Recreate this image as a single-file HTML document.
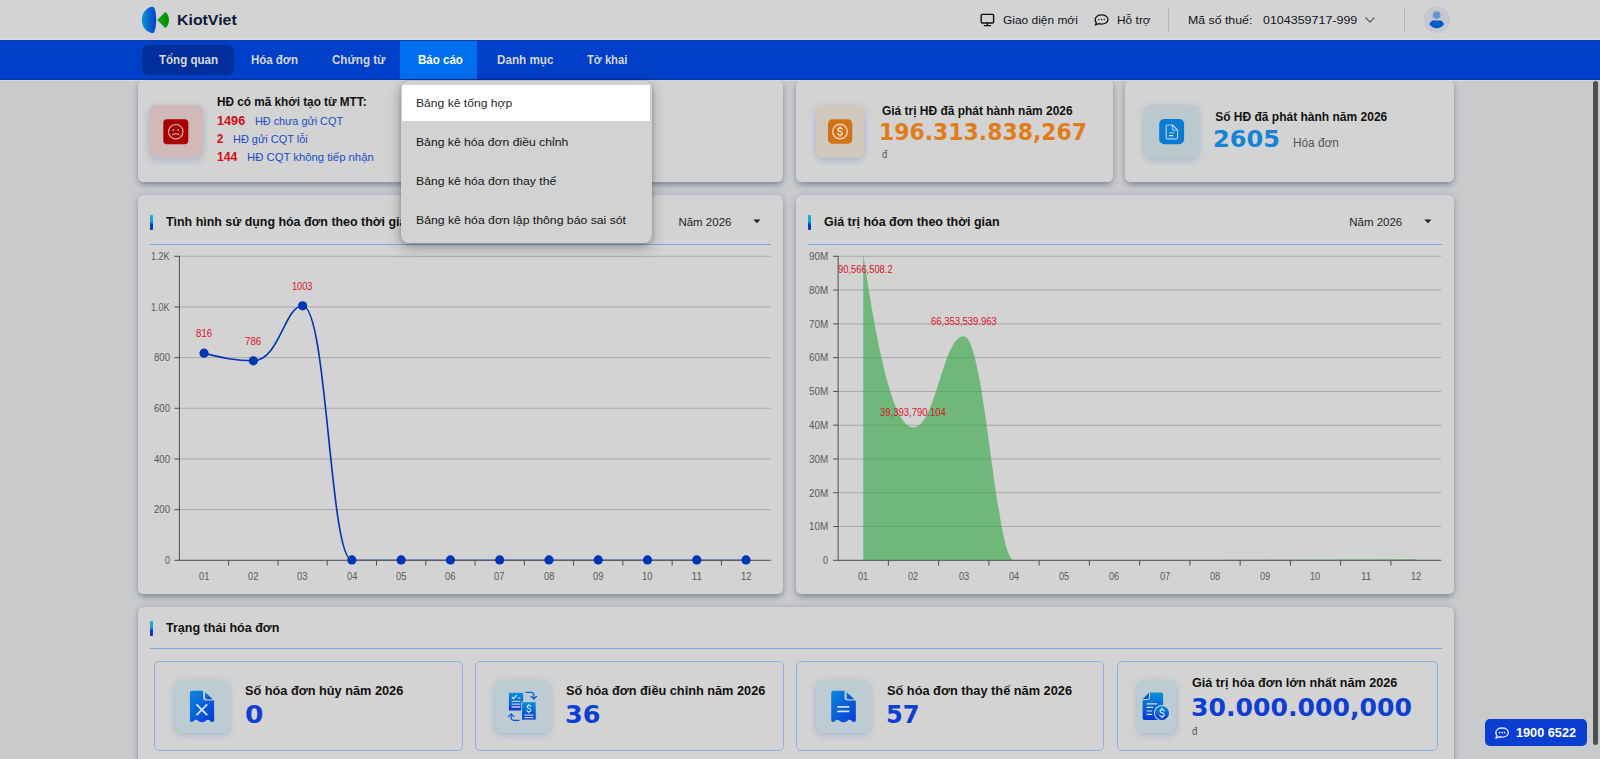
<!DOCTYPE html>
<html lang="vi">
<head>
<meta charset="utf-8">
<title>KiotViet - Tổng quan</title>
<style>
*{box-sizing:border-box;margin:0;padding:0}
html,body{width:1600px;height:759px;overflow:hidden}
body{position:relative;background:#c9cacc;font-family:"Liberation Sans",sans-serif;color:#222}
.abs{position:absolute}
.t{position:absolute;white-space:nowrap;line-height:1;transform-origin:0 50%;z-index:5}
.header{position:absolute;left:0;top:0;width:1600px;height:40px;background:#d3d3d3;z-index:4}
.nav{position:absolute;left:0;top:40px;width:1600px;height:40px;background:#003fc7;z-index:4;border-bottom:1px solid #0033ae;border-top:1px solid #0a3bb4}
.navline{position:absolute;left:0;top:80px;width:1592px;height:1px;background:#d8d6cf;z-index:4}
.pill{position:absolute;left:142px;top:4px;width:92px;height:30px;border-radius:7px;background:#002f9c}
.tabact{position:absolute;left:400px;top:0;width:77px;height:38px;background:#006fef}
.card{position:absolute;background:#d3d3d3;border-radius:5.5px;box-shadow:0 0 5px rgba(85,115,170,.30),0 4px 7px -2px rgba(48,58,80,.50)}
.ibox{position:absolute;border-radius:7px;box-shadow:0 2px 7px rgba(110,145,200,.45)}
.sub{position:absolute;border:1px solid #8fb2e3;border-radius:5px}
.bar{position:absolute;width:3.3px;height:15px;border-radius:1px;background:linear-gradient(#1aa8e4 0%,#179fe0 46%,#0a3ecc 62%,#0a30c4 100%)}
.hline{position:absolute;height:1px;background:#78a9de}
.dd{position:absolute;left:401px;top:80.5px;width:251px;height:162.5px;background:#d2d2d2;border-radius:0 0 8px 8px;box-shadow:0 4px 14px rgba(0,0,0,.30),0 1px 4px rgba(0,0,0,.18);z-index:15;border-radius:8px}
.ddsel{position:absolute;left:1px;top:4.5px;width:248px;height:36px;background:#fff}
.vdiv{position:absolute;width:1px;background:#b2b6bf;top:7.5px;height:24.5px}
.phone{position:absolute;left:1485px;top:719px;width:101.5px;height:26.5px;border-radius:5px;background:#0a3ed2;z-index:35}
.sbar{position:absolute;left:1593.300px;top:81px;width:5.200px;height:664px;border-radius:3px;background:#4e4e4e;z-index:10}
svg{position:absolute;overflow:visible}

</style>
</head>
<body>
<div class="header">
  <!-- logo -->
  <svg style="left:141px;top:6px" width="30" height="28" viewBox="0 0 30 28">
    <defs><linearGradient id="lg1" x1="0" y1="0" x2="1" y2="0"><stop offset="0" stop-color="#0c96d6"/><stop offset=".5" stop-color="#0668cc"/><stop offset="1" stop-color="#0a3fcc"/></linearGradient>
    <linearGradient id="lg2" x1="0" y1="0" x2="1" y2="0"><stop offset="0" stop-color="#10a814"/><stop offset="1" stop-color="#068a0a"/></linearGradient></defs>
    <path d="M10.600 .8C12 .5 13.200 1.200 13.600 2.600C14.800 6.500 15.200 10 15.200 14C15.200 18 14.800 21.500 13.600 25.200C13.200 26.700 12 27.400 10.600 27C4.600 25.400 .9 20.500 .9 14C.9 7.500 4.600 2.400 10.600 .8Z" fill="url(#lg1)"/>
    <path d="M17 13.200L23.200 6.900C24 6 25.200 6.100 25.800 7.200C27.300 9.500 28 11.600 28 14C28 16.400 27.300 18.500 25.800 20.800C25.200 21.900 24 22 23.200 21.100L17 14.800C16.400 14.300 16.400 13.700 17 13.200Z" fill="url(#lg2)"/>
  </svg>
  <!-- monitor icon -->
  <svg style="left:980px;top:13px" width="15" height="14" viewBox="0 0 15 14" fill="none" stroke="#0f0f16" stroke-width="1.4">
    <rect x="1.2" y="1.4" width="12.4" height="8.6" rx="1.2"/><path d="M4.300 12.600h6.200M7.400 10v2.400" stroke-linecap="round"/>
  </svg>
  <!-- chat icon -->
  <svg style="left:1094px;top:14px" width="15" height="12" viewBox="0 0 15 12" fill="none" stroke="#0f0f16" stroke-width="1.3">
    <path d="M7.6 0.9C11.2 0.9 14 2.9 14 5.5S11.2 10.1 7.6 10.1c-.9 0-1.8-.1-2.6-.4L1.4 11l1-2.3C1.500 7.900 1.2 6.800 1.2 5.500 1.2 2.900 4 0.900 7.600 0.900Z" stroke-linejoin="round"/>
    <circle cx="4.9" cy="5.5" r=".7" fill="#0f0f16" stroke="none"/><circle cx="7.6" cy="5.5" r=".7" fill="#0f0f16" stroke="none"/><circle cx="10.3" cy="5.5" r=".7" fill="#0f0f16" stroke="none"/>
  </svg>
  <div class="vdiv" style="left:1168px"></div>
  <svg style="left:1365px;top:17px" width="10" height="6" viewBox="0 0 10 6" fill="none" stroke="#3c3f4c" stroke-width="1.050"><path d="M.6.6 5 5 9.400.6"/></svg>
  <div class="vdiv" style="left:1404px"></div>
  <svg style="left:1423px;top:6px" width="28" height="28" viewBox="0 0 28 28">
    <circle cx="13.700" cy="13.700" r="13.300" fill="#c5c7cc"/>
    <circle cx="13.600" cy="9.100" r="3.800" fill="#6496d3"/>
    <path d="M9.500 14.600H17.900C19.600 15.400 20.600 16.900 21 18.300C19.600 20.700 17 22.200 13.700 22.200C10.400 22.200 7.800 20.700 6.400 18.300C6.800 16.900 7.800 15.400 9.500 14.600Z" fill="#035bcb"/>
  </svg>
</div>
<div class="nav">
  <div class="pill"></div>
  <div class="tabact"></div>
</div>
<div class="navline"></div>
<div class="navline" style="top:39.300px;height:.8px;width:1600px;background:#dddad0;z-index:5"></div>

<!-- top cards -->
<div class="card" style="left:138px;top:80.3px;width:645px;height:101.8px"></div>
<div class="card" style="left:796px;top:80.3px;width:316.5px;height:101.8px"></div>
<div class="card" style="left:1125px;top:80.3px;width:329px;height:101.8px"></div>

<div class="ibox" style="left:149px;top:105px;width:53.5px;height:53px;background:#d0b9b9"></div>
<svg style="left:163px;top:119px" width="26" height="26" viewBox="0 0 26 26">
  <rect x=".3" y=".2" width="25" height="25" rx="3.6" fill="#a90000"/>
  <circle cx="12.800" cy="12.700" r="7.200" fill="none" stroke="#dcbcbc" stroke-width="1.100"/>
  <rect x="9.700" y="10.200" width="1.500" height="1.500" fill="#dcbcbc"/><rect x="14.400" y="10.200" width="1.500" height="1.500" fill="#dcbcbc"/>
  <path d="M9.500 15.700c2-1.200 4.600-1.200 6.600 0" fill="none" stroke="#dcbcbc" stroke-width="1.100" stroke-linecap="round"/>
</svg>

<div class="ibox" style="left:816px;top:105px;width:48px;height:52.5px;background:#d0c8bb"></div>
<svg style="left:828px;top:119px" width="25" height="25" viewBox="0 0 25 25">
  <rect x="0" y=".2" width="24.200" height="24.600" rx="4.600" fill="#d17118"/>
  <circle cx="12" cy="12.500" r="7.300" fill="none" stroke="#ecd3b9" stroke-width="1.400"/>
  <path d="M14.300 10.300c-.4-.9-1.200-1.300-2.200-1.300-1.300 0-2.200.7-2.200 1.700 0 2.400 4.500 1.100 4.500 3.600 0 1.100-1 1.800-2.300 1.800-1.100 0-2-.5-2.400-1.400M12.100 7.700v1.300M12.100 16.100v1.300" fill="none" stroke="#f1dcc6" stroke-width="1.400" stroke-linecap="round"/>
</svg>

<div class="ibox" style="left:1144.300px;top:104.800px;width:54.500px;height:53.600px;background:#bbc9cf"></div>
<svg style="left:1159px;top:118.800px" width="26" height="26" viewBox="0 0 26 26">
  <rect x=".2" y="0" width="24.900" height="25.200" rx="5" fill="#0a7dd3"/>
  <path d="M8.700 6H13.500L18.600 11.100V18.400Q18.600 19.900 17.100 19.900H8.700Q7.200 19.900 7.200 18.400V7.500Q7.200 6 8.700 6Z" fill="none" stroke="#b9d4e8" stroke-width="1.100" stroke-linejoin="round"/>
  <path d="M13.400 6.200V9.700Q13.400 11.200 14.900 11.200H18.400" fill="none" stroke="#b9d4e8" stroke-width="1.100"/>
  <path d="M10.400 13.700H15.200" stroke="#7fb6e4" stroke-width="1.600"/>
  <path d="M10.400 16.700H13.800" stroke="#d5e6f2" stroke-width="1.200" stroke-linecap="round"/>
</svg>

<!-- chart panels -->
<div class="card" style="left:138px;top:195.300px;width:645px;height:398.500px"></div>
<div class="card" style="left:796px;top:195.300px;width:658px;height:398.500px"></div>
<div class="bar" style="left:150px;top:215px"></div>
<div class="bar" style="left:808px;top:215px"></div>
<div class="hline" style="left:150px;top:244px;width:621px"></div>
<div class="hline" style="left:808px;top:244px;width:634px"></div>
<svg style="left:752.5px;top:219px" width="8" height="5" viewBox="0 0 8 5"><path d="M.3.500h7.200L3.900 4.300Z" fill="#222"/></svg>
<svg style="left:1424px;top:219px" width="8" height="5" viewBox="0 0 8 5"><path d="M.3.500h7.200L3.900 4.300Z" fill="#222"/></svg>
<svg style="left:0;top:0;z-index:2" width="1600" height="759" viewBox="0 0 1600 759">
<path d="M179.4 509.63H770.7" stroke="#a9a9a9" stroke-width="1" fill="none"/>
<path d="M179.4 458.97H770.7" stroke="#a9a9a9" stroke-width="1" fill="none"/>
<path d="M179.4 408.30H770.7" stroke="#a9a9a9" stroke-width="1" fill="none"/>
<path d="M179.4 357.63H770.7" stroke="#a9a9a9" stroke-width="1" fill="none"/>
<path d="M179.4 306.97H770.7" stroke="#a9a9a9" stroke-width="1" fill="none"/>
<path d="M179.4 256.30H770.7" stroke="#a9a9a9" stroke-width="1" fill="none"/>
<path d="M174.4 560.30H179.4" stroke="#505050" stroke-width="1" fill="none"/>
<path d="M174.4 509.63H179.4" stroke="#505050" stroke-width="1" fill="none"/>
<path d="M174.4 458.97H179.4" stroke="#505050" stroke-width="1" fill="none"/>
<path d="M174.4 408.30H179.4" stroke="#505050" stroke-width="1" fill="none"/>
<path d="M174.4 357.63H179.4" stroke="#505050" stroke-width="1" fill="none"/>
<path d="M174.4 306.97H179.4" stroke="#505050" stroke-width="1" fill="none"/>
<path d="M174.4 256.30H179.4" stroke="#505050" stroke-width="1" fill="none"/>
<path d="M204.04 353.18C220.46 357.23 233.60 360.78 253.31 360.78C278.94 360.78 284.85 305.81 302.59 305.81C327.23 305.81 329.69 559.90 351.86 559.90" stroke="#0034b0" stroke-width="1.6" fill="none" stroke-linecap="round"/>
<path d="M351.86 560.00H746.06" stroke="#3a5fcf" stroke-width="1.2" fill="none"/>
<path d="M179.4 255.80V560.80" stroke="#505050" stroke-width="1" fill="none"/>
<path d="M179.4 560.30H770.7" stroke="#505050" stroke-width="1" fill="none"/>
<path d="M228.68 560.30V565.60" stroke="#505050" stroke-width="1" fill="none"/>
<path d="M277.95 560.30V565.60" stroke="#505050" stroke-width="1" fill="none"/>
<path d="M327.23 560.30V565.60" stroke="#505050" stroke-width="1" fill="none"/>
<path d="M376.50 560.30V565.60" stroke="#505050" stroke-width="1" fill="none"/>
<path d="M425.78 560.30V565.60" stroke="#505050" stroke-width="1" fill="none"/>
<path d="M475.05 560.30V565.60" stroke="#505050" stroke-width="1" fill="none"/>
<path d="M524.33 560.30V565.60" stroke="#505050" stroke-width="1" fill="none"/>
<path d="M573.60 560.30V565.60" stroke="#505050" stroke-width="1" fill="none"/>
<path d="M622.88 560.30V565.60" stroke="#505050" stroke-width="1" fill="none"/>
<path d="M672.15 560.30V565.60" stroke="#505050" stroke-width="1" fill="none"/>
<path d="M721.43 560.30V565.60" stroke="#505050" stroke-width="1" fill="none"/>
<circle cx="204.04" cy="353.18" r="4.6" fill="#0034b4"/>
<circle cx="253.31" cy="360.78" r="4.6" fill="#0034b4"/>
<circle cx="302.59" cy="305.81" r="4.6" fill="#0034b4"/>
<circle cx="351.86" cy="559.90" r="4.6" fill="#0034b4"/>
<circle cx="401.14" cy="559.90" r="4.6" fill="#0034b4"/>
<circle cx="450.41" cy="559.90" r="4.6" fill="#0034b4"/>
<circle cx="499.69" cy="559.90" r="4.6" fill="#0034b4"/>
<circle cx="548.96" cy="559.90" r="4.6" fill="#0034b4"/>
<circle cx="598.24" cy="559.90" r="4.6" fill="#0034b4"/>
<circle cx="647.51" cy="559.90" r="4.6" fill="#0034b4"/>
<circle cx="696.79" cy="559.90" r="4.6" fill="#0034b4"/>
<circle cx="746.06" cy="559.90" r="4.6" fill="#0034b4"/>
<path d="M838.1 526.52H1441.2" stroke="#a9a9a9" stroke-width="1" fill="none"/>
<path d="M838.1 492.74H1441.2" stroke="#a9a9a9" stroke-width="1" fill="none"/>
<path d="M838.1 458.97H1441.2" stroke="#a9a9a9" stroke-width="1" fill="none"/>
<path d="M838.1 425.19H1441.2" stroke="#a9a9a9" stroke-width="1" fill="none"/>
<path d="M838.1 391.41H1441.2" stroke="#a9a9a9" stroke-width="1" fill="none"/>
<path d="M838.1 357.63H1441.2" stroke="#a9a9a9" stroke-width="1" fill="none"/>
<path d="M838.1 323.86H1441.2" stroke="#a9a9a9" stroke-width="1" fill="none"/>
<path d="M838.1 290.08H1441.2" stroke="#a9a9a9" stroke-width="1" fill="none"/>
<path d="M838.1 256.30H1441.2" stroke="#a9a9a9" stroke-width="1" fill="none"/>
<path d="M833.1 560.30H838.1" stroke="#505050" stroke-width="1" fill="none"/>
<path d="M833.1 526.52H838.1" stroke="#505050" stroke-width="1" fill="none"/>
<path d="M833.1 492.74H838.1" stroke="#505050" stroke-width="1" fill="none"/>
<path d="M833.1 458.97H838.1" stroke="#505050" stroke-width="1" fill="none"/>
<path d="M833.1 425.19H838.1" stroke="#505050" stroke-width="1" fill="none"/>
<path d="M833.1 391.41H838.1" stroke="#505050" stroke-width="1" fill="none"/>
<path d="M833.1 357.63H838.1" stroke="#505050" stroke-width="1" fill="none"/>
<path d="M833.1 323.86H838.1" stroke="#505050" stroke-width="1" fill="none"/>
<path d="M833.1 290.08H838.1" stroke="#505050" stroke-width="1" fill="none"/>
<path d="M833.1 256.30H838.1" stroke="#505050" stroke-width="1" fill="none"/>
<path d="M863.23 560.30L863.23 254.39C879.98 366.74 895.39 427.24 913.49 427.24C936.10 427.24 942.64 336.17 963.75 336.17C984.85 336.17 995.91 560.30 1014.00 560.30L1416.07 559.30L1416.07 560.30Z" fill="#2ea63f" fill-opacity=".6" stroke="none"/>
<path d="M838.1 255.80V560.80" stroke="#505050" stroke-width="1" fill="none"/>
<path d="M838.1 560.30H1441.2" stroke="#505050" stroke-width="1" fill="none"/>
<path d="M888.36 560.30V565.60" stroke="#505050" stroke-width="1" fill="none"/>
<path d="M938.62 560.30V565.60" stroke="#505050" stroke-width="1" fill="none"/>
<path d="M988.88 560.30V565.60" stroke="#505050" stroke-width="1" fill="none"/>
<path d="M1039.13 560.30V565.60" stroke="#505050" stroke-width="1" fill="none"/>
<path d="M1089.39 560.30V565.60" stroke="#505050" stroke-width="1" fill="none"/>
<path d="M1139.65 560.30V565.60" stroke="#505050" stroke-width="1" fill="none"/>
<path d="M1189.91 560.30V565.60" stroke="#505050" stroke-width="1" fill="none"/>
<path d="M1240.17 560.30V565.60" stroke="#505050" stroke-width="1" fill="none"/>
<path d="M1290.42 560.30V565.60" stroke="#505050" stroke-width="1" fill="none"/>
<path d="M1340.68 560.30V565.60" stroke="#505050" stroke-width="1" fill="none"/>
<path d="M1390.94 560.30V565.60" stroke="#505050" stroke-width="1" fill="none"/>
</svg>

<!-- bottom panel -->
<div class="card" style="left:138px;top:607.300px;width:1316px;height:170px"></div>
<div class="bar" style="left:150px;top:620.800px"></div>
<div class="hline" style="left:150px;top:647.700px;width:1292px"></div>
<div class="sub" style="left:154px;top:661px;width:309px;height:90px"></div>
<div class="sub" style="left:475px;top:661px;width:308.500px;height:90px"></div>
<div class="sub" style="left:796px;top:661px;width:308.300px;height:90px"></div>
<div class="sub" style="left:1116.500px;top:661px;width:321.500px;height:90px"></div>
<div class="ibox" style="left:174.700px;top:679.700px;width:54.400px;height:53.300px;background:#bdccd3"></div>
<div class="ibox" style="left:495.400px;top:679.700px;width:54.400px;height:53.300px;background:#bdccd3"></div>
<div class="ibox" style="left:816.400px;top:679.700px;width:54px;height:53.300px;background:#bdccd3"></div>
<div class="ibox" style="left:1137px;top:679.700px;width:38.500px;height:53.300px;background:#bdccd3"></div>
<svg style="left:0;top:0;z-index:3" width="1600" height="759" viewBox="0 0 1600 759">
  <defs>
    <linearGradient id="ig" x1="0" y1="0" x2="1" y2="1"><stop offset="0" stop-color="#0a88dc"/><stop offset="1" stop-color="#0838d6"/></linearGradient>
    <linearGradient id="ig2" x1="0" y1="0" x2="0" y2="1"><stop offset="0" stop-color="#0a92d8"/><stop offset="1" stop-color="#0838d4"/></linearGradient>
  </defs>
  <!-- icon 1: cancelled receipt -->
  <g transform="translate(189.9 690.8)">
    <path d="M2.200 0H13.100V7.300Q13.100 9.700 15.500 9.700H24.200V29.400Q24.200 31.100 22.600 31.100Q21.300 31.100 20.300 30.100Q19.200 28.900 18 28.900Q16.800 28.900 15.700 30.100Q14.200 31.400 12.100 31.400Q10 31.400 8.500 30.100Q7.400 28.900 6.200 28.900Q5 28.900 3.900 30.100Q2.900 31.100 1.600 31.100Q0 31.100 0 29.400V2.200Q0 0 2.200 0Z" fill="url(#ig)"/>
    <path d="M15.200 1.300L22.700 8.400H16.600Q15.200 8.400 15.200 7Z" fill="url(#ig)"/>
    <path d="M7.100 14.100L16.800 23.800M16.800 14.100L7.100 23.800" stroke="#d3e0e8" stroke-width="1.900" stroke-linecap="round" fill="none"/>
  </g>
  <!-- icon 3: replaced receipt -->
  <g transform="translate(831.2 690.8)">
    <path d="M2.200 0H13.300V7.300Q13.300 9.700 15.700 9.700H24.600V29.400Q24.600 31.100 23 31.100Q21.700 31.100 20.700 30.100Q19.500 28.900 18.300 28.900Q17.100 28.900 16 30.100Q14.400 31.400 12.300 31.400Q10.200 31.400 8.600 30.100Q7.500 28.900 6.300 28.900Q5.100 28.900 3.900 30.100Q2.900 31.100 1.600 31.100Q0 31.100 0 29.400V2.200Q0 0 2.200 0Z" fill="url(#ig)"/>
    <path d="M15.400 1.300L23.100 8.400H16.800Q15.400 8.400 15.400 7Z" fill="url(#ig)"/>
    <path d="M6.700 16H17.500M6.700 20.600H17.500" stroke="#d3e0e8" stroke-width="1.700" stroke-linecap="round" fill="none"/>
  </g>
  <!-- icon 2: adjust docs -->
  <g transform="translate(508 690)">
    <rect x=".9" y="2.800" width="14.300" height="17.800" rx=".8" fill="url(#ig2)"/>
    <path d="M3.900 7L5.600 8.700L8.900 5.200" stroke="#dbe7ee" stroke-width="1.200" fill="none"/>
    <path d="M9.700 8.100H12.400" stroke="#dbe7ee" stroke-width="1" fill="none"/>
    <path d="M3.600 11.400H12.400M3.600 14.200H12.400M3.600 17H12.400" stroke="#b9cfe9" stroke-width="1.300" fill="none"/>
    <rect x="13.600" y="11.700" width="14.600" height="18.400" rx=".8" fill="url(#ig2)" stroke="#c4d3da" stroke-width=".9"/>
    <path d="M22.900 16.600C22.500 15.700 21.800 15.400 20.900 15.400C19.800 15.400 19 16 19 16.900C19 19 22.900 17.900 22.900 20.200C22.900 21.100 22.100 21.800 20.900 21.800C20 21.800 19.200 21.400 18.800 20.600M20.900 14.200V15.400M20.900 21.800V23" stroke="#dbe7ee" stroke-width="1.100" fill="none" stroke-linecap="round"/>
    <path d="M16.400 25.200H25.400M16.400 27.600H25.400" stroke="#b9cfe9" stroke-width="1.300" fill="none"/>
    <path d="M18 2.400H23.300Q25.800 2.400 25.800 4.900V8" stroke="#0a66d8" stroke-width="1.200" fill="none" stroke-linecap="round"/>
    <path d="M23 6.300L25.800 9L28.600 6.300" stroke="#0a55d6" stroke-width="1.200" fill="none" stroke-linecap="round" stroke-linejoin="round"/>
    <path d="M11 30.300H5.700Q3.200 30.300 3.200 27.800V24.800" stroke="#0a4ed6" stroke-width="1.200" fill="none" stroke-linecap="round"/>
    <path d="M.4 26.600L3.200 23.900L6 26.600" stroke="#0a55d6" stroke-width="1.200" fill="none" stroke-linecap="round" stroke-linejoin="round"/>
  </g>
  <!-- icon 4: max value -->
  <g transform="translate(1142.600 692.600)">
    <path d="M7.300 0H18.700Q20.500 0 20.500 1.800V25.600Q20.500 27.400 18.700 27.400H1.800Q0 27.400 0 25.600V7.300H5.500Q7.300 7.300 7.300 5.500Z" fill="url(#ig2)"/>
    <path d="M6.300 .2V5Q6.300 6.300 5 6.300H.2Z" fill="#0a58d6"/>
    <path d="M4 11.200H14.400M4 14.800H10.800M4 18.400H9.600M4 21.800H9.600" stroke="#d3e0e8" stroke-width="1.200" fill="none"/>
    <circle cx="19.400" cy="20.500" r="8.100" fill="#c9d8e0"/>
    <circle cx="19.400" cy="20.500" r="7.100" fill="url(#ig2)"/>
    <path d="M21.500 18.300C21.100 17.400 20.300 17 19.400 17C18.200 17 17.400 17.700 17.400 18.600C17.400 20.900 21.600 19.700 21.600 22.200C21.600 23.200 20.700 23.900 19.400 23.900C18.400 23.900 17.600 23.500 17.200 22.600M19.400 15.600V17M19.400 23.900V25.300" stroke="#dbe7ee" stroke-width="1.200" fill="none" stroke-linecap="round"/>
  </g>
</svg>


<!-- dropdown -->
<div class="dd"><div class="ddsel"></div></div>

<!-- phone -->
<div class="phone">
  <svg style="left:10px;top:7.500px" width="14" height="12" viewBox="0 0 15 12">
    <path d="M7.600 .6C11.400 .6 14.300 2.700 14.300 5.500S11.400 10.400 7.600 10.400c-.9 0-1.800-.1-2.600-.4L1 11.400l1.100-2.600C1.300 7.900.9 6.800.9 5.500.9 2.700 3.800.6 7.600.6Z" fill="none" stroke="#dfe6fa" stroke-width="1.500" stroke-linejoin="round"/>
    <circle cx="4.900" cy="5.500" r=".95" fill="#dfe6fa"/><circle cx="7.600" cy="5.500" r=".95" fill="#dfe6fa"/><circle cx="10.300" cy="5.500" r=".95" fill="#dfe6fa"/>
  </svg>
</div>
<div class="sbar"></div>
<span class="t" style="left:177.30px;top:12.00px;font-size:15.00px;font-weight:700;color:#0b1a38;transform:scaleX(1.0584);">KiotViet</span>
<span class="t" style="left:1002.50px;top:15.10px;font-size:11.50px;font-weight:400;color:#12121a;transform:scaleX(1.0373);">Giao diện mới</span>
<span class="t" style="left:1116.60px;top:15.10px;font-size:11.50px;font-weight:400;color:#12121a;transform:scaleX(1.0379);">Hỗ trợ</span>
<span class="t" style="left:1188.20px;top:15.00px;font-size:11.50px;font-weight:400;color:#12121a;transform:scaleX(1.0700);">Mã số thuế:</span>
<span class="t" style="left:1262.80px;top:15.00px;font-size:11.50px;font-weight:400;color:#12121a;transform:scaleX(1.0841);">0104359717-999</span>
<span class="t" style="left:159.00px;top:54.20px;font-size:12.00px;font-weight:700;color:#d9d9d9;transform:scaleX(0.9620);">Tổng quan</span>
<span class="t" style="left:251.20px;top:54.20px;font-size:12.00px;font-weight:700;color:#d5d5d5;transform:scaleX(0.9532);">Hóa đơn</span>
<span class="t" style="left:331.50px;top:54.20px;font-size:12.00px;font-weight:700;color:#d5d5d5;transform:scaleX(0.9661);">Chứng từ</span>
<span class="t" style="left:418.40px;top:54.20px;font-size:12.00px;font-weight:700;color:#ffffff;transform:scaleX(0.9617);">Báo cáo</span>
<span class="t" style="left:496.60px;top:54.20px;font-size:12.00px;font-weight:700;color:#d5d5d5;transform:scaleX(0.9739);">Danh mục</span>
<span class="t" style="left:587.00px;top:54.20px;font-size:12.00px;font-weight:700;color:#d5d5d5;transform:scaleX(0.9325);">Tờ khai</span>
<span class="t" style="left:416.00px;top:97.60px;font-size:11.50px;font-weight:400;color:#2a2a2a;transform:scaleX(1.0535);z-index:30;">Bảng kê tổng hợp</span>
<span class="t" style="left:416.00px;top:136.60px;font-size:11.50px;font-weight:400;color:#151515;transform:scaleX(1.0589);z-index:30;">Bảng kê hóa đơn điều chỉnh</span>
<span class="t" style="left:416.30px;top:175.70px;font-size:11.50px;font-weight:400;color:#151515;transform:scaleX(1.0610);z-index:30;">Bảng kê hóa đơn thay thế</span>
<span class="t" style="left:416.30px;top:214.90px;font-size:11.50px;font-weight:400;color:#151515;transform:scaleX(1.0636);z-index:30;">Bảng kê hóa đơn lập thông báo sai sót</span>
<span class="t" style="left:217.00px;top:96.20px;font-size:12.00px;font-weight:700;color:#111;transform:scaleX(0.9806);">HĐ có mã khởi tạo từ MTT:</span>
<span class="t" style="left:217.00px;top:114.90px;font-size:12.00px;font-weight:700;color:#d60c16;transform:scaleX(1.0561);">1496</span>
<span class="t" style="left:254.60px;top:115.90px;font-size:11.50px;font-weight:400;color:#184dc6;transform:scaleX(0.9426);">HĐ chưa gửi CQT</span>
<span class="t" style="left:217.00px;top:132.90px;font-size:12.00px;font-weight:700;color:#d60c16;transform:scaleX(0.9421);">2</span>
<span class="t" style="left:232.90px;top:133.90px;font-size:11.50px;font-weight:400;color:#184dc6;transform:scaleX(0.9525);">HĐ gửi CQT lỗi</span>
<span class="t" style="left:217.00px;top:151.30px;font-size:12.00px;font-weight:700;color:#d60c16;transform:scaleX(1.0134);">144</span>
<span class="t" style="left:246.90px;top:152.30px;font-size:11.50px;font-weight:400;color:#184dc6;transform:scaleX(0.9828);">HĐ CQT không tiếp nhận</span>
<span class="t" style="left:881.70px;top:104.50px;font-size:12.00px;font-weight:700;color:#111;transform:scaleX(0.9959);">Giá trị HĐ đã phát hành năm 2026</span>
<span class="t" style="left:879.40px;top:120.80px;font-size:23.00px;font-weight:700;color:#e07d1a;transform:scaleX(0.9530);font-family:'DejaVu Sans',sans-serif;">196.313.838,267</span>
<span class="t" style="left:881.70px;top:150.20px;font-size:10.00px;font-weight:400;color:#555;transform:scaleX(0.9528);">đ</span>
<span class="t" style="left:1215.20px;top:111.00px;font-size:12.00px;font-weight:700;color:#111;">Số HĐ đã phát hành năm 2026</span>
<span class="t" style="left:1213.20px;top:127.50px;font-size:23.00px;font-weight:700;color:#1583d6;transform:scaleX(1.0466);font-family:'DejaVu Sans',sans-serif;">2605</span>
<span class="t" style="left:1293.30px;top:137.20px;font-size:12.00px;font-weight:400;color:#555;transform:scaleX(0.9854);">Hóa đơn</span>
<span class="t" style="left:166.00px;top:215.70px;font-size:12.00px;font-weight:700;color:#111;transform:scaleX(1.0345);">Tình hình sử dụng hóa đơn theo thời gian</span>
<span class="t" style="left:678.40px;top:216.90px;font-size:11.50px;font-weight:400;color:#262626;">Năm 2026</span>
<span class="t" style="left:824.00px;top:215.70px;font-size:12.00px;font-weight:700;color:#111;transform:scaleX(1.0387);">Giá trị hóa đơn theo thời gian</span>
<span class="t" style="left:1349.20px;top:216.90px;font-size:11.50px;font-weight:400;color:#262626;">Năm 2026</span>
<span class="t" style="left:166.10px;top:622.20px;font-size:12.00px;font-weight:700;color:#111;transform:scaleX(1.0447);">Trạng thái hóa đơn</span>
<span class="t" style="left:245.30px;top:684.50px;font-size:12.00px;font-weight:700;color:#111;transform:scaleX(1.0601);">Số hóa đơn hủy năm 2026</span>
<span class="t" style="left:244.60px;top:703.00px;font-size:24.00px;font-weight:700;color:#0d3fd2;transform:scaleX(1.1016);font-family:'DejaVu Sans',sans-serif;">0</span>
<span class="t" style="left:566.10px;top:684.70px;font-size:12.00px;font-weight:700;color:#111;transform:scaleX(1.0606);">Số hóa đơn điều chỉnh năm 2026</span>
<span class="t" style="left:565.30px;top:703.20px;font-size:24.00px;font-weight:700;color:#0d3fd2;transform:scaleX(1.0627);font-family:'DejaVu Sans',sans-serif;">36</span>
<span class="t" style="left:887.20px;top:684.70px;font-size:12.00px;font-weight:700;color:#111;transform:scaleX(1.0638);">Số hóa đơn thay thế năm 2026</span>
<span class="t" style="left:885.60px;top:703.20px;font-size:24.00px;font-weight:700;color:#0d3fd2;transform:scaleX(1.0058);font-family:'DejaVu Sans',sans-serif;">57</span>
<span class="t" style="left:1191.60px;top:677.20px;font-size:12.00px;font-weight:700;color:#111;transform:scaleX(1.0522);">Giá trị hóa đơn lớn nhất năm 2026</span>
<span class="t" style="left:1190.60px;top:696.00px;font-size:24.00px;font-weight:700;color:#0d3fd2;transform:scaleX(1.0472);font-family:'DejaVu Sans',sans-serif;">30.000.000,000</span>
<span class="t" style="left:1191.60px;top:727.30px;font-size:10.00px;font-weight:400;color:#555;transform:scaleX(0.9708);">đ</span>
<span class="t" style="left:1515.60px;top:726.50px;font-size:12.00px;font-weight:700;color:#fff;transform:scaleX(1.0576);z-index:40;">1900 6522</span>
<span class="t" style="left:164.80px;top:556.10px;font-size:10.00px;font-weight:400;color:#5a5a5a;transform:scaleX(0.9169);">0</span>
<span class="t" style="left:153.80px;top:505.43px;font-size:10.00px;font-weight:400;color:#5a5a5a;transform:scaleX(0.9648);">200</span>
<span class="t" style="left:153.80px;top:454.77px;font-size:10.00px;font-weight:400;color:#5a5a5a;transform:scaleX(0.9648);">400</span>
<span class="t" style="left:153.80px;top:404.10px;font-size:10.00px;font-weight:400;color:#5a5a5a;transform:scaleX(0.9648);">600</span>
<span class="t" style="left:153.80px;top:353.43px;font-size:10.00px;font-weight:400;color:#5a5a5a;transform:scaleX(0.9648);">800</span>
<span class="t" style="left:151.40px;top:302.77px;font-size:10.00px;font-weight:400;color:#5a5a5a;transform:scaleX(0.8990);">1.0K</span>
<span class="t" style="left:151.40px;top:252.10px;font-size:10.00px;font-weight:400;color:#5a5a5a;transform:scaleX(0.8990);">1.2K</span>
<span class="t" style="left:198.84px;top:571.80px;font-size:10.00px;font-weight:400;color:#5a5a5a;transform:scaleX(0.9348);">01</span>
<span class="t" style="left:248.11px;top:571.80px;font-size:10.00px;font-weight:400;color:#5a5a5a;transform:scaleX(0.9348);">02</span>
<span class="t" style="left:297.39px;top:571.80px;font-size:10.00px;font-weight:400;color:#5a5a5a;transform:scaleX(0.9348);">03</span>
<span class="t" style="left:346.66px;top:571.80px;font-size:10.00px;font-weight:400;color:#5a5a5a;transform:scaleX(0.9348);">04</span>
<span class="t" style="left:395.94px;top:571.80px;font-size:10.00px;font-weight:400;color:#5a5a5a;transform:scaleX(0.9348);">05</span>
<span class="t" style="left:445.21px;top:571.80px;font-size:10.00px;font-weight:400;color:#5a5a5a;transform:scaleX(0.9348);">06</span>
<span class="t" style="left:494.49px;top:571.80px;font-size:10.00px;font-weight:400;color:#5a5a5a;transform:scaleX(0.9348);">07</span>
<span class="t" style="left:543.76px;top:571.80px;font-size:10.00px;font-weight:400;color:#5a5a5a;transform:scaleX(0.9348);">08</span>
<span class="t" style="left:593.04px;top:571.80px;font-size:10.00px;font-weight:400;color:#5a5a5a;transform:scaleX(0.9348);">09</span>
<span class="t" style="left:642.31px;top:571.80px;font-size:10.00px;font-weight:400;color:#5a5a5a;transform:scaleX(0.9348);">10</span>
<span class="t" style="left:691.59px;top:571.80px;font-size:10.00px;font-weight:400;color:#5a5a5a;">11</span>
<span class="t" style="left:740.86px;top:571.80px;font-size:10.00px;font-weight:400;color:#5a5a5a;transform:scaleX(0.9348);">12</span>
<span class="t" style="left:195.94px;top:329.18px;font-size:10.00px;font-weight:400;color:#da1426;transform:scaleX(0.9708);">816</span>
<span class="t" style="left:245.21px;top:336.78px;font-size:10.00px;font-weight:400;color:#da1426;transform:scaleX(0.9708);">786</span>
<span class="t" style="left:292.34px;top:281.81px;font-size:10.00px;font-weight:400;color:#da1426;transform:scaleX(0.9213);">1003</span>
<span class="t" style="left:823.40px;top:556.10px;font-size:10.00px;font-weight:400;color:#5a5a5a;transform:scaleX(0.9169);">0</span>
<span class="t" style="left:809.40px;top:522.32px;font-size:10.00px;font-weight:400;color:#5a5a5a;transform:scaleX(0.9818);">10M</span>
<span class="t" style="left:809.40px;top:488.54px;font-size:10.00px;font-weight:400;color:#5a5a5a;transform:scaleX(0.9818);">20M</span>
<span class="t" style="left:809.40px;top:454.77px;font-size:10.00px;font-weight:400;color:#5a5a5a;transform:scaleX(0.9818);">30M</span>
<span class="t" style="left:809.40px;top:420.99px;font-size:10.00px;font-weight:400;color:#5a5a5a;transform:scaleX(0.9818);">40M</span>
<span class="t" style="left:809.40px;top:387.21px;font-size:10.00px;font-weight:400;color:#5a5a5a;transform:scaleX(0.9818);">50M</span>
<span class="t" style="left:809.40px;top:353.43px;font-size:10.00px;font-weight:400;color:#5a5a5a;transform:scaleX(0.9818);">60M</span>
<span class="t" style="left:809.40px;top:319.66px;font-size:10.00px;font-weight:400;color:#5a5a5a;transform:scaleX(0.9818);">70M</span>
<span class="t" style="left:809.40px;top:285.88px;font-size:10.00px;font-weight:400;color:#5a5a5a;transform:scaleX(0.9818);">80M</span>
<span class="t" style="left:809.40px;top:252.10px;font-size:10.00px;font-weight:400;color:#5a5a5a;transform:scaleX(0.9818);">90M</span>
<span class="t" style="left:858.13px;top:571.80px;font-size:10.00px;font-weight:400;color:#5a5a5a;transform:scaleX(0.9169);">01</span>
<span class="t" style="left:908.39px;top:571.80px;font-size:10.00px;font-weight:400;color:#5a5a5a;transform:scaleX(0.9169);">02</span>
<span class="t" style="left:958.65px;top:571.80px;font-size:10.00px;font-weight:400;color:#5a5a5a;transform:scaleX(0.9169);">03</span>
<span class="t" style="left:1008.90px;top:571.80px;font-size:10.00px;font-weight:400;color:#5a5a5a;transform:scaleX(0.9169);">04</span>
<span class="t" style="left:1059.16px;top:571.80px;font-size:10.00px;font-weight:400;color:#5a5a5a;transform:scaleX(0.9169);">05</span>
<span class="t" style="left:1109.42px;top:571.80px;font-size:10.00px;font-weight:400;color:#5a5a5a;transform:scaleX(0.9169);">06</span>
<span class="t" style="left:1159.68px;top:571.80px;font-size:10.00px;font-weight:400;color:#5a5a5a;transform:scaleX(0.9169);">07</span>
<span class="t" style="left:1209.94px;top:571.80px;font-size:10.00px;font-weight:400;color:#5a5a5a;transform:scaleX(0.9169);">08</span>
<span class="t" style="left:1260.20px;top:571.80px;font-size:10.00px;font-weight:400;color:#5a5a5a;transform:scaleX(0.9169);">09</span>
<span class="t" style="left:1310.45px;top:571.80px;font-size:10.00px;font-weight:400;color:#5a5a5a;transform:scaleX(0.9169);">10</span>
<span class="t" style="left:1360.71px;top:571.80px;font-size:10.00px;font-weight:400;color:#5a5a5a;transform:scaleX(0.9817);">11</span>
<span class="t" style="left:1410.97px;top:571.80px;font-size:10.00px;font-weight:400;color:#5a5a5a;transform:scaleX(0.9169);">12</span>
<span class="t" style="left:837.50px;top:265.10px;font-size:10.00px;font-weight:400;color:#da1426;transform:scaleX(0.9351);">90,566,508.2</span>
<span class="t" style="left:879.80px;top:408.30px;font-size:10.00px;font-weight:400;color:#da1426;transform:scaleX(0.9480);">39,393,790.104</span>
<span class="t" style="left:930.70px;top:316.80px;font-size:10.00px;font-weight:400;color:#da1426;transform:scaleX(0.9465);">66,353,539.963</span>

</body>
</html>
